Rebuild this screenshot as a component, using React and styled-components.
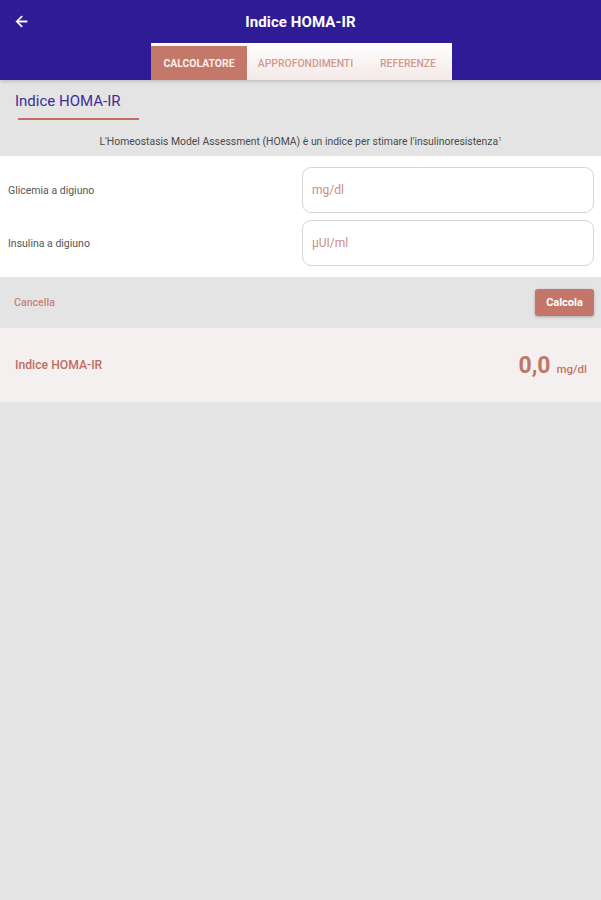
import React, { useState } from 'react';
import styled, { createGlobalStyle } from 'styled-components';

const GlobalStyle = createGlobalStyle`
  html, body {
    margin: 0;
    padding: 0;
    background-color: #e4e4e4;
    font-family: Roboto, 'Liberation Sans', sans-serif;
  }
`;

const Page = styled.div`
  min-height: 900px;
  background-color: #e4e4e4;
`;

const Header = styled.header`
  background-color: #301b97;
  height: 80px;
  display: flex;
  flex-direction: column;
  box-shadow: 0 2px 3px rgba(0, 0, 0, 0.15);
  position: relative;
  z-index: 1;
`;

const TopRow = styled.div`
  height: 43px;
  display: flex;
  align-items: center;
  justify-content: center;
  position: relative;
`;

const BackButton = styled.button`
  position: absolute;
  left: 12px;
  top: 12px;
  background: none;
  border: none;
  padding: 0;
  width: 18px;
  height: 18px;
  display: flex;
  align-items: center;
  justify-content: center;
  cursor: pointer;
`;

const Title = styled.h1`
  margin: 0;
  color: #ffffff;
  font-size: 15px;
  font-weight: 700;
  letter-spacing: 0.1px;
`;

const TabBar = styled.nav`
  align-self: center;
  width: 301px;
  height: 37px;
  margin-left: 2px;
  display: flex;
  background: linear-gradient(#ffffff, #f3e9e6);
  box-sizing: border-box;
  padding-top: 3px;
`;

const Tab = styled.button`
  border: none;
  padding: 0;
  width: ${(p) => p.$w}px;
  font-family: Roboto, 'Liberation Sans', sans-serif;
  font-size: 10.4px;
  font-weight: ${(p) => (p.$active ? 700 : 500)};
  color: ${(p) => (p.$active ? '#fbeeea' : '#d09a90')};
  background-color: ${(p) => (p.$active ? '#c4786a' : 'transparent')};
  text-transform: uppercase;
  cursor: pointer;
`;

const Section = styled.section`
  padding: 12px 0 0;
`;

const SectionTitle = styled.h2`
  margin: 0 0 0 15px;
  font-size: 15px;
  font-weight: 400;
  color: #3b2c9a;
  line-height: 18px;
`;

const Underline = styled.div`
  margin: 8px 0 0 18px;
  width: 121px;
  height: 2px;
  background-color: #c2715f;
`;

const Description = styled.p`
  margin: 13px 0 0;
  text-align: center;
  font-size: 10.4px;
  color: #4a4a4a;
  line-height: 12px;
  padding-bottom: 8px;

  sup {
    font-size: 6px;
  }
`;

const FormPanel = styled.div`
  background-color: #ffffff;
  padding: 11px 7px 11px 8px;
  display: flex;
  flex-direction: column;
  gap: 7px;
`;

const FieldRow = styled.div`
  display: flex;
  align-items: center;
  justify-content: space-between;
`;

const FieldLabel = styled.label`
  font-size: 10.5px;
  color: #555555;
`;

const Input = styled.input`
  width: 292px;
  height: 46px;
  box-sizing: border-box;
  border: 1px solid #d6d6d6;
  border-radius: 9px;
  padding: 0 9px;
  font-family: Roboto, 'Liberation Sans', sans-serif;
  font-size: 12px;
  color: #333;
  outline: none;

  &::placeholder {
    color: #c98c86;
  }
`;

const ActionBar = styled.div`
  height: 51px;
  display: flex;
  align-items: center;
  justify-content: space-between;
  padding: 0 7px 0 14px;
`;

const CancelButton = styled.button`
  background: none;
  border: none;
  padding: 0;
  font-family: Roboto, 'Liberation Sans', sans-serif;
  font-size: 10.6px;
  font-weight: 500;
  color: #c7837a;
  cursor: pointer;
`;

const CalcButton = styled.button`
  width: 59px;
  height: 27px;
  border: none;
  border-radius: 3px;
  background-color: #c4766a;
  color: #ffffff;
  font-family: Roboto, 'Liberation Sans', sans-serif;
  font-size: 11px;
  font-weight: 700;
  box-shadow: 0 1px 3px rgba(0, 0, 0, 0.25);
  cursor: pointer;
`;

const ResultBand = styled.div`
  height: 74px;
  background-color: #f4f0f0;
  display: flex;
  align-items: center;
  justify-content: space-between;
  padding: 0 14px 0 15px;
`;

const ResultLabel = styled.span`
  font-size: 12.2px;
  font-weight: 500;
  color: #bf6f60;
`;

const ResultValue = styled.div`
  display: flex;
  align-items: baseline;
  gap: 6px;
  color: #c27566;
`;

const ValueNumber = styled.span`
  font-size: 23px;
  font-weight: 700;
`;

const ValueUnit = styled.span`
  font-size: 11.5px;
  font-weight: 500;
`;

const tabs = [
  { label: 'Calcolatore', w: 96 },
  { label: 'Approfondimenti', w: 117 },
  { label: 'Referenze', w: 88 },
];

const App = () => {
  const [active, setActive] = useState(0);
  const [glucose, setGlucose] = useState('');
  const [insulin, setInsulin] = useState('');

  return (
    <Page>
      <GlobalStyle />
      <Header>
        <TopRow>
          <BackButton aria-label="Indietro">
            <svg width="17" height="17" viewBox="0 0 24 24">
              <path
                d="M20 11H7.83l5.59-5.59L12 4l-8 8 8 8 1.41-1.41L7.83 13H20v-2z"
                fill="#ffffff"
                stroke="#ffffff"
                strokeWidth="0.6"
              />
            </svg>
          </BackButton>
          <Title>Indice HOMA-IR</Title>
        </TopRow>
        <TabBar>
          {tabs.map((t, i) => (
            <Tab key={t.label} $w={t.w} $active={i === active} onClick={() => setActive(i)}>
              {t.label}
            </Tab>
          ))}
        </TabBar>
      </Header>

      <Section>
        <SectionTitle>Indice HOMA-IR</SectionTitle>
        <Underline />
        <Description>
          L'Homeostasis Model Assessment (HOMA) è un indice per stimare l'insulinoresistenza<sup>1</sup>
        </Description>
      </Section>

      <FormPanel>
        <FieldRow>
          <FieldLabel htmlFor="glucose">Glicemia a digiuno</FieldLabel>
          <Input
            id="glucose"
            placeholder="mg/dl"
            value={glucose}
            onChange={(e) => setGlucose(e.target.value)}
          />
        </FieldRow>
        <FieldRow>
          <FieldLabel htmlFor="insulin">Insulina a digiuno</FieldLabel>
          <Input
            id="insulin"
            placeholder="µUI/ml"
            value={insulin}
            onChange={(e) => setInsulin(e.target.value)}
          />
        </FieldRow>
      </FormPanel>

      <ActionBar>
        <CancelButton>Cancella</CancelButton>
        <CalcButton>Calcola</CalcButton>
      </ActionBar>

      <ResultBand>
        <ResultLabel>Indice HOMA-IR</ResultLabel>
        <ResultValue>
          <ValueNumber>0,0</ValueNumber>
          <ValueUnit>mg/dl</ValueUnit>
        </ResultValue>
      </ResultBand>
    </Page>
  );
};

export default App;
